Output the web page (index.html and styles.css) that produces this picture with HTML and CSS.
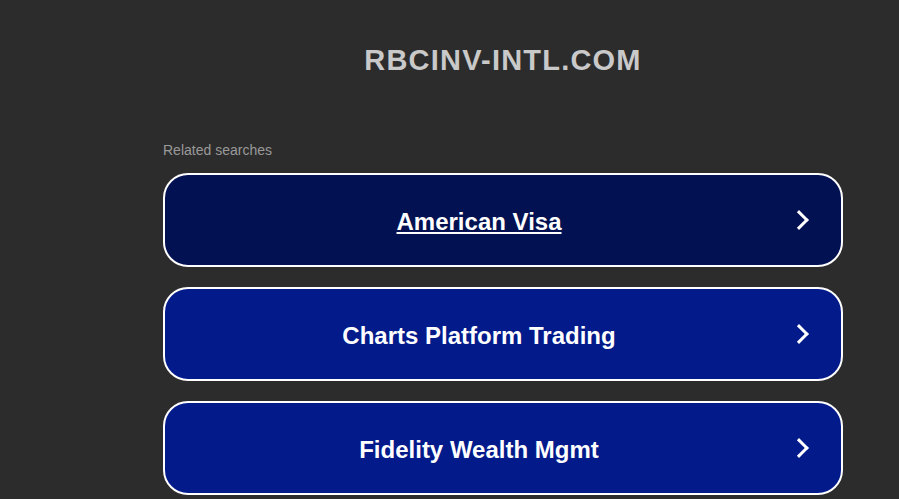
FILE: index.html
```html
<!DOCTYPE html>
<html>
<head>
  <title>rbcinv-intl.com</title>
  <link rel="stylesheet" href="styles.css">
</head>
<body>
  <div class="container">
    <h1 class="domain">RBCINV-INTL.COM</h1>
    <div class="related">Related searches</div>
    <div class="links">
      <a class="link active" href="#">
        <span class="label">American Visa</span>
        <span class="arrow"></span>
      </a>
      <a class="link" href="#">
        <span class="label">Charts Platform Trading</span>
        <span class="arrow"></span>
      </a>
      <a class="link" href="#">
        <span class="label">Fidelity Wealth Mgmt</span>
        <span class="arrow"></span>
      </a>
    </div>
  </div>
</body>
</html>
```

FILE: styles.css
```css
body {
  margin: 0;
  font-family: Arial, "Liberation Sans", sans-serif;
  background-color: #2c2c2c;
  height: 499px;
  overflow: hidden;
}
.container {
  width: 680px;
  margin-left: 163px;
  padding-top: 42px;
}
.domain {
  margin: 0;
  text-align: center;
  font-size: 29px;
  letter-spacing: 1.2px;
  line-height: 36px;
  color: #c9c9c9;
}
.related {
  margin-top: 64px;
  font-size: 14px;
  color: #9a9a9a;
  line-height: 16px;
}
.links {
  margin-top: 15px;
  display: flex;
  flex-direction: column;
  gap: 20px;
}
.link {
  display: flex;
  align-items: center;
  height: 90px;
  border: 2px solid #fff;
  border-radius: 25px;
  background-color: #021a8a;
  color: #fff;
  text-decoration: none;
}
.link.active {
  background-color: #011152;
}
.link .label {
  flex: 1;
  text-align: center;
  font-size: 24px;
  font-weight: bold;
  padding-top: 3px;
}
.link.active .label {
  text-decoration: underline;
}
.link .arrow {
  width: 18px;
  height: 18px;
  margin-right: 30px;
  position: relative;
}
.link .arrow::after {
  content: "";
  position: absolute;
  left: -1px;
  top: 2px;
  width: 11px;
  height: 11px;
  border-top: 3px solid #fff;
  border-right: 3px solid #fff;
  transform: rotate(45deg);
}
```
